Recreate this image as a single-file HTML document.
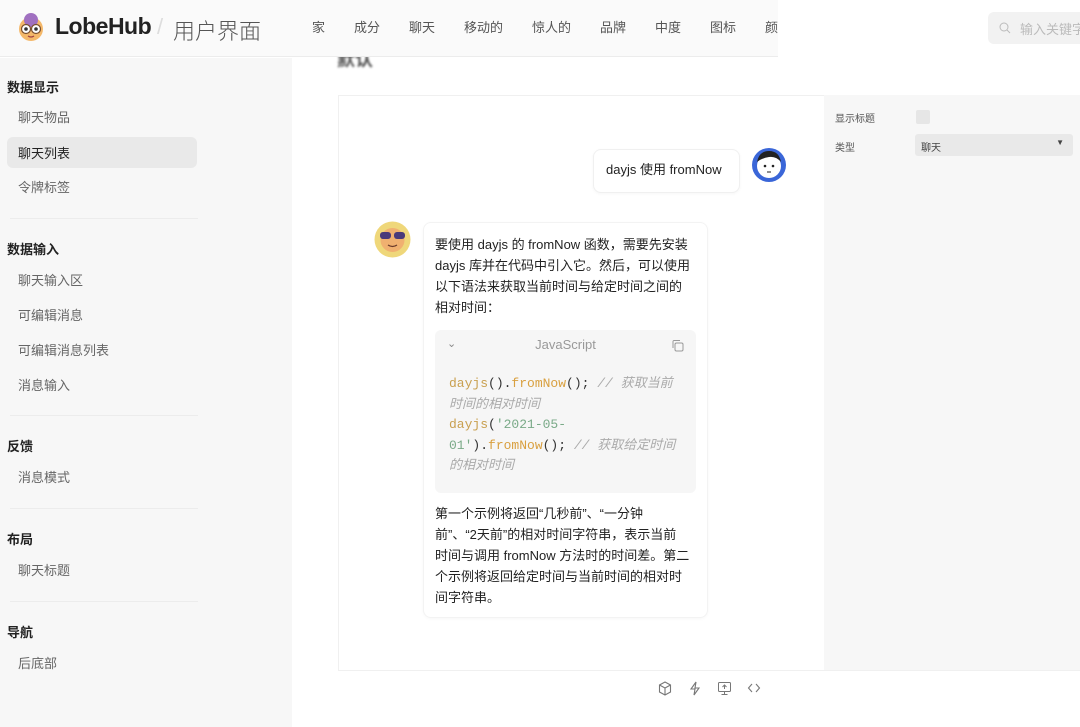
<!DOCTYPE html>
<html><head><meta charset="utf-8"><style>
*{box-sizing:border-box;margin:0;padding:0}
body{width:1080px;height:727px;overflow:hidden;background:#fff;font-family:"Liberation Sans","Noto Sans CJK SC",sans-serif;color:#222;position:relative}
.hdr{position:absolute;left:0;top:0;width:1080px;height:57px;background:#fafafa;border-bottom:1px solid #ececec;z-index:5}
.logo{position:absolute;left:16px;top:12px;width:30px;height:30px}
.brand{position:absolute;left:55px;top:13px;font-size:23px;font-weight:bold;letter-spacing:-0.5px}
.slash{position:absolute;left:157px;top:14px;font-size:22px;color:#ddd}
.sub{position:absolute;left:173px;top:14px;font-size:22px;color:#555;font-weight:300}
.nav{position:absolute;top:17px;font-size:13px;color:#555}
.search{position:absolute;left:988px;top:12px;width:100px;height:32px;background:#f2f2f2;border-radius:6px;font-size:13px;color:#bbb;padding:7px 0 0 32px}
.side{position:absolute;left:0;top:58px;width:292px;height:669px;background:#f7f7f7}
.gh{position:absolute;left:7px;font-size:13px;font-weight:bold;color:#222}
.it{position:absolute;left:18px;font-size:13px;color:#666}
.sel{position:absolute;left:7px;width:190px;height:31px;background:#e9e9e9;border-radius:6px}
.div{position:absolute;left:10px;width:188px;border-top:1px solid #ececec}
.card{position:absolute;left:338px;top:95px;width:750px;height:610px;border:1px solid #f0f0f0;background:#fff}
.panel{position:absolute;left:824px;top:95px;width:256px;height:575px;background:#f7f7f7}
.foot{position:absolute;left:338px;top:670px;width:742px;height:36px;border-top:1px solid #f0f0f0;background:#fff}
.txt{font-size:13px;line-height:21px;color:#222;white-space:nowrap}
.code{font-family:"Liberation Mono","Noto Sans CJK SC",monospace;font-size:13px;line-height:20.5px;color:#333;white-space:nowrap}
.y{color:#c9a050}.o{color:#d9a040}.g{color:#7aaa88}.c{color:#aaa;font-style:italic}
</style></head><body>
<div class="hdr">
<svg class="logo" viewBox="0 0 30 30"><circle cx="15" cy="17" r="12" fill="#f4b86a"/><circle cx="15" cy="8" r="7" fill="#a070c0"/><circle cx="10" cy="17" r="4.5" fill="#fff" stroke="#7a5030" stroke-width="1.2"/><circle cx="20" cy="17" r="4.5" fill="#fff" stroke="#7a5030" stroke-width="1.2"/><circle cx="10" cy="17" r="1.8" fill="#333"/><circle cx="20" cy="17" r="1.8" fill="#333"/><path d="M12 24q3 2 6 0" stroke="#a04040" fill="none" stroke-width="1.3"/></svg>
<div class="brand">LobeHub</div><div class="slash">/</div><div class="sub">用户界面</div>
<div class="nav" style="left:312px">家</div>
<div class="nav" style="left:354px">成分</div>
<div class="nav" style="left:409px">聊天</div>
<div class="nav" style="left:464px">移动的</div>
<div class="nav" style="left:532px">惊人的</div>
<div class="nav" style="left:600px">品牌</div>
<div class="nav" style="left:655px">中度</div>
<div class="nav" style="left:710px">图标</div>
<div class="nav" style="left:765px">颜</div>
<div class="nav" style="left:793px;top:15px;font-weight:bold;letter-spacing:1px">···</div>
<div style="position:absolute;left:778px;top:0;width:302px;height:57px;background:#fff"></div>
<div class="search"><svg style="position:absolute;left:11px;top:10px" width="12" height="12" viewBox="0 0 12 12"><circle cx="5" cy="5" r="4" stroke="#bbb" fill="none"/><path d="M8 8l3 3" stroke="#bbb"/></svg>输入关键字</div>
</div>
<div class="side">
<div class="gh" style="top:19px">数据显示</div>
<div class="it" style="top:49px">聊天物品</div>
<div class="sel" style="top:79px"></div>
<div class="it" style="top:85px;color:#222">聊天列表</div>
<div class="it" style="top:119px">令牌标签</div>
<div class="div" style="top:160px"></div>
<div class="gh" style="top:181px">数据输入</div>
<div class="it" style="top:212px">聊天输入区</div>
<div class="it" style="top:247px">可编辑消息</div>
<div class="it" style="top:282px">可编辑消息列表</div>
<div class="it" style="top:317px">消息输入</div>
<div class="div" style="top:357px"></div>
<div class="gh" style="top:378px">反馈</div>
<div class="it" style="top:409px">消息模式</div>
<div class="div" style="top:450px"></div>
<div class="gh" style="top:471px">布局</div>
<div class="it" style="top:502px">聊天标题</div>
<div class="div" style="top:543px"></div>
<div class="gh" style="top:564px">导航</div>
<div class="it" style="top:595px">后底部</div>
</div>
<div style="position:absolute;left:337px;top:46px;font-size:18px;font-weight:bold;color:#555;filter:blur(1px)">默认</div>
<div class="card"></div>
<div class="panel">
<div style="position:absolute;left:11px;top:15px;font-size:10px;color:#555">显示标题</div>
<div style="position:absolute;left:92px;top:15px;width:14px;height:14px;background:#e6e6e6;border-radius:2px"></div>
<div style="position:absolute;left:11px;top:44px;font-size:10px;color:#555">类型</div>
<div style="position:absolute;left:91px;top:39px;width:158px;height:22px;background:#e9e9e9;border-radius:3px;font-size:10px;color:#444;padding:5px 6px">聊天<span style="position:absolute;right:9px;top:4px;font-size:8px">▼</span></div>
</div>
<div style="position:absolute;left:593px;top:149px;width:147px;height:44px;border:1px solid #f0f0f0;border-radius:8px;background:#fff;box-shadow:0 1px 3px rgba(0,0,0,.04)"></div>
<div class="txt" style="position:absolute;left:606px;top:159px">dayjs 使用 fromNow</div>
<svg style="position:absolute;left:751px;top:147px" width="36" height="36" viewBox="0 0 36 36"><circle cx="18" cy="18" r="17" fill="#3a66d8"/><circle cx="18" cy="19" r="12" fill="#fff"/><path d="M6 15q2-11 12-11t12 11q-5-6-12-5t-12 5z" fill="#222"/><circle cx="14" cy="19" r="1.3" fill="#222"/><circle cx="22" cy="19" r="1.3" fill="#222"/><path d="M16 25h4" stroke="#222"/></svg>
<svg style="position:absolute;left:374px;top:221px" width="37" height="37" viewBox="0 0 37 37"><circle cx="18.5" cy="18.5" r="18" fill="#efd77a"/><circle cx="18.5" cy="19" r="12" fill="#f0b070"/><rect x="6" y="11" width="11" height="7" rx="3" fill="#4a3a7a"/><rect x="20" y="11" width="11" height="7" rx="3" fill="#4a3a7a"/><path d="M14 24q4.5 3 9 0" stroke="#6a3a2a" fill="none" stroke-width="1.3"/></svg>
<div style="position:absolute;left:423px;top:222px;width:285px;height:396px;border:1px solid #f3f3f3;border-radius:8px;background:#fff;box-shadow:0 1px 3px rgba(0,0,0,.03)"></div>
<div class="txt" style="position:absolute;left:435px;top:234px">要使用 dayjs 的 fromNow 函数，需要先安装<br>dayjs 库并在代码中引入它。然后，可以使用<br>以下语法来获取当前时间与给定时间之间的<br>相对时间：</div>
<div style="position:absolute;left:435px;top:330px;width:261px;height:163px;background:#f6f6f6;border-radius:6px">
<div style="position:absolute;left:12px;top:7px;font-size:11px;color:#888">⌄</div>
<div style="position:absolute;left:0;width:261px;top:7px;text-align:center;font-size:13px;color:#999">JavaScript</div>
<svg style="position:absolute;left:236px;top:9px" width="13" height="13" viewBox="0 0 13 13"><rect x="4" y="4" width="8" height="8" rx="1.5" stroke="#999" fill="none"/><path d="M2 9V2.5A1 1 0 0 1 3 1.5H9" stroke="#999" fill="none"/></svg>
<div class="code" style="position:absolute;left:14px;top:44px"><span class="y">dayjs</span>().<span class="o">fromNow</span>(); <span class="c">// 获取当前</span><br><span class="c">时间的相对时间</span><br><span class="y">dayjs</span>(<span class="g">'2021-05-</span><br><span class="g">01'</span>).<span class="o">fromNow</span>(); <span class="c">// 获取给定时间</span><br><span class="c">的相对时间</span></div>
</div>
<div class="txt" style="position:absolute;left:435px;top:503px">第一个示例将返回“几秒前”、“一分钟<br>前”、“2天前”的相对时间字符串，表示当前<br>时间与调用 fromNow 方法时的时间差。第二<br>个示例将返回给定时间与当前时间的相对时<br>间字符串。</div>
<div class="foot">
<svg style="position:absolute;left:320px;top:10px" width="14" height="15" viewBox="0 0 14 15"><path d="M7 1l5.5 3v7L7 14 1.5 11V4z M1.5 4L7 7l5.5-3 M7 7v7" stroke="#777" fill="none" stroke-width="1.1"/></svg>
<svg style="position:absolute;left:350px;top:10px" width="14" height="15" viewBox="0 0 14 15"><path d="M8 1L3 8h4l-1 6 5-7H7z" stroke="#777" fill="none" stroke-width="1.1"/></svg>
<svg style="position:absolute;left:379px;top:10px" width="15" height="15" viewBox="0 0 15 15"><rect x="1.5" y="1.5" width="12" height="9" rx="1" stroke="#777" fill="none"/><path d="M7.5 10.5v3M4.5 13.5h6M7.5 8V4M5.5 6l2-2 2 2" stroke="#777" fill="none"/></svg>
<svg style="position:absolute;left:409px;top:11px" width="14" height="12" viewBox="0 0 14 12"><path d="M5 2L1.5 6 5 10M9 2l3.5 4L9 10" stroke="#777" fill="none" stroke-width="1.1"/></svg>
</div>
</body></html>
